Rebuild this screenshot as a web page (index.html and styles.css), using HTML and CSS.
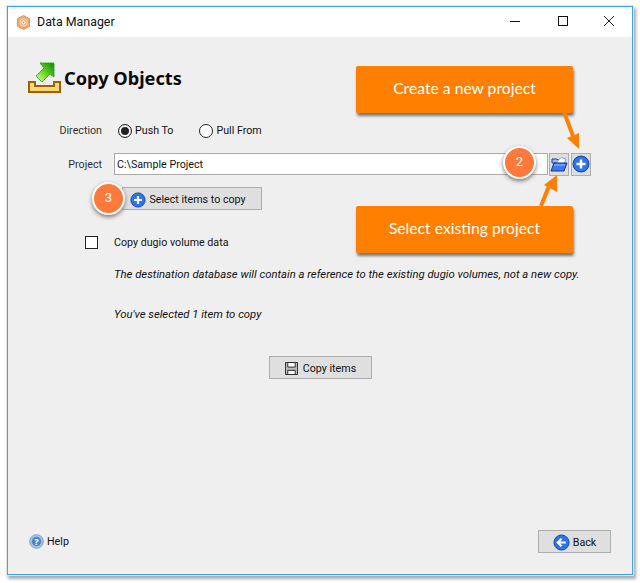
FILE: index.html
```html
<!DOCTYPE html>
<html lang="en">
<head>
<meta charset="utf-8">
<title>Data Manager</title>
<link rel="stylesheet" href="styles.css">
</head>
<body>
<div class="window">
  <header class="titlebar">
    <svg class="app-icon" viewBox="0 0 16 16" width="15" height="15"><path d="M8 .5 14.500 4v8L8 15.500 1.500 12V4Z" fill="#eeb078" stroke="#e0924a"/><circle cx="8" cy="8" r="5" fill="#fbe3cc" stroke="#e8924a"/><circle cx="8" cy="8" r="2.800" fill="#fff" stroke="#e8924a"/><circle cx="8" cy="8" r="1" fill="#e8863a"/></svg>
    <span class="title">Data Manager</span>
    <div class="controls">
      <svg viewBox="0 0 46 30" width="46" height="30"><path d="M16 21.500H26" stroke="#111" fill="none"/></svg>
      <svg viewBox="0 0 46 30" width="46" height="30"><rect x="18.500" y="16.500" width="9" height="9" fill="none" stroke="#111"/></svg>
      <svg viewBox="0 0 46 30" width="46" height="30"><path d="M18 16l10 10M28 16 18 26" stroke="#222" fill="none"/></svg>
    </div>
  </header>
  <main class="content">
    <div class="heading">
      <svg class="heading-icon" viewBox="0 0 34 32" width="34" height="32">
        <defs><linearGradient id="g" x1="0" y1="1" x2="1" y2="0"><stop offset="0" stop-color="#eefcc0"/><stop offset=".45" stop-color="#70d820"/><stop offset="1" stop-color="#0a8a08"/></linearGradient></defs>
        <path d="M1 20h6v4h19v-4h6v10H1Z" fill="#f8d878" stroke="#a06000" stroke-width="2"/>
        <path d="M12 1h14v14l-4-3-8 8-6-6 8-8Z" fill="url(#g)" stroke="#2a9a18" stroke-dasharray="2 .5"/>
      </svg>
      <h1>Copy Objects</h1>
    </div>
    <div class="row direction">
      <span class="label">Direction</span>
      <label class="radio"><span class="dot on"></span>Push To</label>
      <label class="radio"><span class="dot"></span>Pull From</label>
    </div>
    <div class="row project">
      <span class="label project-label">Project</span>
      <div class="input">C:\Sample Project</div>
      <button class="icon-btn"><svg viewBox="0 0 18 16" width="18" height="16"><path d="M2 3h5l1 1h5v3H2Z" fill="#9db8e8" stroke="#1a3fa8"/><path d="M6 7 11 1.500 16 3 14 8Z" fill="#fff" stroke="#8ca0c8"/><path d="M4 7h13l-3 8H1Z" fill="#3f78ec" stroke="#12309a"/><path d="M4 9h11" stroke="#9cc0f8"/></svg></button>
      <button class="icon-btn"><svg viewBox="0 0 18 18" width="18" height="18"><circle cx="9" cy="9" r="8" fill="#2a76e8" stroke="#1a3fa8"/><path d="M9 4.500v9M4.500 9h9" stroke="#fff" stroke-width="2.500"/></svg></button>
    </div>
    <button class="btn select"><svg viewBox="0 0 18 18" width="16" height="16"><circle cx="9" cy="9" r="8" fill="#2a76e8" stroke="#1a3fa8"/><path d="M9 4.500v9M4.500 9h9" stroke="#fff" stroke-width="2.500"/></svg>Select items to copy</button>
    <div class="check-row"><span class="checkbox"></span><span class="check-text">Copy dugio volume data</span></div>
    <p class="note first-note">The destination database will contain a reference to the existing dugio volumes, not a new copy.</p>
    <p class="note second-note">You've selected 1 item to copy</p>
    <div class="copy-wrap">
      <button class="btn copy"><svg viewBox="0 0 14 14" width="13" height="13"><path d="M.5.500h13v13H.5Z" fill="#bbb" stroke="#222"/><path d="M3 .5h8v5H3Z" fill="#fff" stroke="#222"/><path d="M3 9h8v4.500H3Z" fill="#fff" stroke="#222"/></svg>Copy items</button>
    </div>
    <footer class="footer">
      <div class="help"><svg viewBox="0 0 16 16" width="15" height="15"><circle cx="8" cy="8" r="7.300" fill="#a8c2e2" stroke="#7e9fc8"/><circle cx="8" cy="8" r="5" fill="#4f82c4"/><text x="8" y="11.500" text-anchor="middle" class="q">?</text></svg>Help</div>
      <button class="btn back"><svg viewBox="0 0 18 18" width="17" height="17"><circle cx="9" cy="9" r="8" fill="#2a76e8" stroke="#1a3fa8"/><path d="M13.500 9H6M9 5 5 9l4 4" stroke="#fff" stroke-width="2.200" fill="none"/></svg>Back</button>
    </footer>
  </main>
</div>

<div class="callout create">Create a new project</div>
<div class="callout existing">Select existing project</div>
<svg class="arrows" viewBox="0 0 640 583" width="640" height="583">
  <path d="M564 112 573 136" stroke="#ff8000" stroke-width="4"/>
  <path d="M579 149 567 138 579 133Z" fill="#ff8000"/>
  <path d="M541 206 549 186" stroke="#ff8000" stroke-width="4"/>
  <path d="M557 175 557 192 544 185Z" fill="#ff8000"/>
</svg>
<div class="badge two">2</div>
<div class="badge three">3</div>
</body>
</html>
```
FILE: styles.css
```css
* { box-sizing: border-box; }
html, body { margin: 0; height: 100%; }
body { background: #fff; font: 10.7px/14px Roboto, "Noto Sans", sans-serif; color: #111; position: relative; overflow: hidden; padding: 6px 0 0 7px; }
.window { width: 626px; height: 569px; border: 1px solid #3ba7e6; background: #efefef; box-shadow: 0 0 0 1px #e4e4e4, 2px 3px 3px 1px #aaa; display: flex; flex-direction: column; }
.titlebar { height: 30px; background: #fff; display: flex; align-items: center; padding-left: 8px; flex: none; }
.app-icon { flex: none; }
.title { margin-left: 6px; font-size: 12.4px; color: #111; }
.controls { margin-left: auto; display: flex; align-self: flex-start; margin-top: -7px; }
.controls svg { display: block; }
.content { flex: 1; display: flex; flex-direction: column; padding: 25px 0 0; min-height: 0; }
.heading { display: flex; align-items: center; margin-left: 20px; height: 32px; }
.heading-icon { flex: none; }
h1 { margin: 0 0 0 2px; font: bold 18.2px/24px "Noto Sans", "Open Sans", sans-serif; color: #0a0a0a; }
.row { display: flex; align-items: center; }
.label { width: 94px; text-align: right; color: #333; flex: none; }
.direction { margin-top: 29px; height: 16px; }
.radio { display: flex; align-items: center; gap: 3px; }
.direction .radio:first-of-type { margin-left: 16px; }
.direction .radio + .radio { margin-left: 26px; }
.dot { width: 14px; height: 14px; border-radius: 50%; border: 1px solid #222; background: #fff; display: block; }
.dot.on { box-shadow: inset 0 0 0 2px #fff, inset 0 0 0 8px #222; }
.project { margin-top: 13px; height: 24px; }
.project-label { padding-top: 2px; }
.input { margin-left: 12px; width: 434px; height: 22px; background: #fff; border: 1px solid #aaa; padding: 4px 2px 0; color: #111; }
button { font: inherit; color: #111; }
.icon-btn { width: 20px; height: 23px; padding: 0; background: #dedede; border: 1px solid #adadad; margin-left: 2px; display: flex; align-items: center; justify-content: center; }
.icon-btn:first-of-type { margin-left: 1px; }
.btn { display: flex; align-items: center; justify-content: center; gap: 3px; background: #dfdfdf; border: 1px solid #adadad; padding: 2px 0 0; }
.select { margin: 11px 0 0 114px; width: 140px; height: 23px; padding-right: 8px; }
.check-row { display: flex; align-items: center; gap: 16px; margin: 24px 0 0 77px; height: 16px; }
.check-text { padding-top: 2px; }
.checkbox { width: 13px; height: 13px; border: 1px solid #222; background: #fff; flex: none; }
.note { font-size: 11.3px; font-style: italic; margin: 0 0 0 106px; color: #111; white-space: nowrap; }
.first-note { margin-top: 18px; }
.second-note { margin-top: 26px; }
.copy-wrap { margin: 34px 0 0 261px; }
.copy { width: 103px; height: 23px; gap: 5px; }
.footer { margin-top: auto; display: flex; align-items: center; justify-content: space-between; padding: 0 21px 21px 21px; }
.help { display: flex; align-items: center; gap: 3px; }
.q { font: bold 10px "Noto Sans", sans-serif; fill: #fff; }
.back { width: 73px; height: 23px; }
.callout { position: absolute; background: #ff8000; color: #fff; font: 15.7px/20px Lato, "Open Sans", sans-serif; display: flex; align-items: center; justify-content: center; padding-bottom: 4px; border-radius: 2px; left: 356px; width: 217px; height: 47px; box-shadow: 1px 3px 3px #777; }
.create { top: 66px; }
.existing { top: 206px; }
.arrows { position: absolute; left: 0; top: 0; pointer-events: none; }
.badge { position: absolute; width: 33px; height: 33px; border-radius: 50%; background: #fe7a3c; border: 2px solid #fff; color: #fff; font: 13px/28px Roboto, sans-serif; text-align: center; box-shadow: 0 2px 4px #777; }
.two { left: 503px; top: 146px; }
.three { left: 92px; top: 182px; }
```
